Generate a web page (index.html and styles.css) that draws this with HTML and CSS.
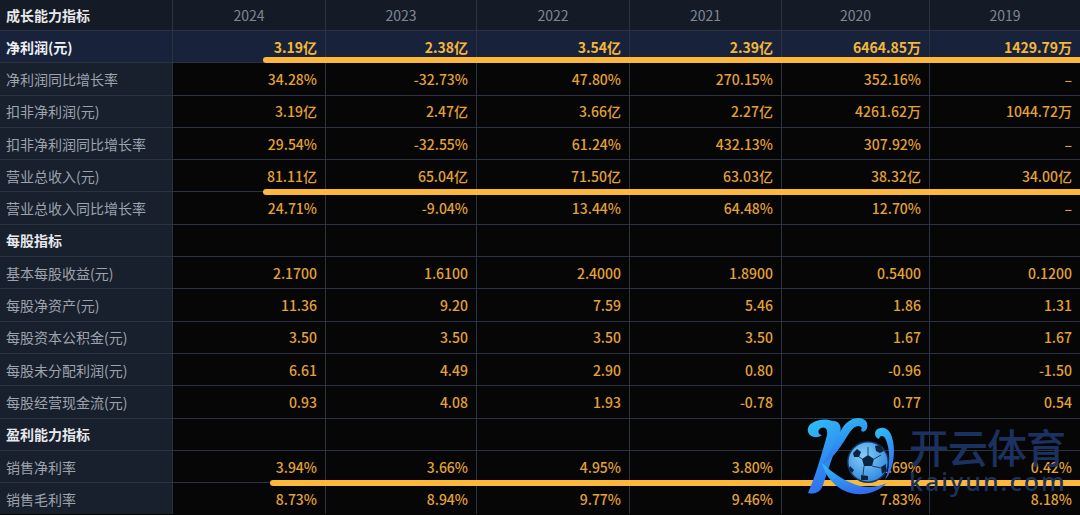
FILE: index.html
```html
<!DOCTYPE html>
<html lang="zh-CN">
<head>
<meta charset="utf-8">
<title>成长能力指标</title>
<link rel="stylesheet" href="styles.css">
</head>
<body>
<div class="page">
  <div class="grid">
    <div class="cell label head-label">成长能力指标</div>
    <div class="cell year">2024</div>
    <div class="cell year">2023</div>
    <div class="cell year">2022</div>
    <div class="cell year">2021</div>
    <div class="cell year">2020</div>
    <div class="cell year">2019</div>

    <div class="cell label hl-label">净利润(元)</div>
    <div class="cell val hl">3.19亿</div>
    <div class="cell val hl">2.38亿</div>
    <div class="cell val hl">3.54亿</div>
    <div class="cell val hl">2.39亿</div>
    <div class="cell val hl">6464.85万</div>
    <div class="cell val hl">1429.79万</div>

    <div class="cell label">净利润同比增长率</div>
    <div class="cell val">34.28%</div>
    <div class="cell val">-32.73%</div>
    <div class="cell val">47.80%</div>
    <div class="cell val">270.15%</div>
    <div class="cell val">352.16%</div>
    <div class="cell val">–</div>

    <div class="cell label">扣非净利润(元)</div>
    <div class="cell val">3.19亿</div>
    <div class="cell val">2.47亿</div>
    <div class="cell val">3.66亿</div>
    <div class="cell val">2.27亿</div>
    <div class="cell val">4261.62万</div>
    <div class="cell val">1044.72万</div>

    <div class="cell label">扣非净利润同比增长率</div>
    <div class="cell val">29.54%</div>
    <div class="cell val">-32.55%</div>
    <div class="cell val">61.24%</div>
    <div class="cell val">432.13%</div>
    <div class="cell val">307.92%</div>
    <div class="cell val">–</div>

    <div class="cell label">营业总收入(元)</div>
    <div class="cell val">81.11亿</div>
    <div class="cell val">65.04亿</div>
    <div class="cell val">71.50亿</div>
    <div class="cell val">63.03亿</div>
    <div class="cell val">38.32亿</div>
    <div class="cell val">34.00亿</div>

    <div class="cell label">营业总收入同比增长率</div>
    <div class="cell val">24.71%</div>
    <div class="cell val">-9.04%</div>
    <div class="cell val">13.44%</div>
    <div class="cell val">64.48%</div>
    <div class="cell val">12.70%</div>
    <div class="cell val">–</div>

    <div class="cell label section">每股指标</div>
    <div class="cell val"></div>
    <div class="cell val"></div>
    <div class="cell val"></div>
    <div class="cell val"></div>
    <div class="cell val"></div>
    <div class="cell val"></div>

    <div class="cell label">基本每股收益(元)</div>
    <div class="cell val">2.1700</div>
    <div class="cell val">1.6100</div>
    <div class="cell val">2.4000</div>
    <div class="cell val">1.8900</div>
    <div class="cell val">0.5400</div>
    <div class="cell val">0.1200</div>

    <div class="cell label">每股净资产(元)</div>
    <div class="cell val">11.36</div>
    <div class="cell val">9.20</div>
    <div class="cell val">7.59</div>
    <div class="cell val">5.46</div>
    <div class="cell val">1.86</div>
    <div class="cell val">1.31</div>

    <div class="cell label">每股资本公积金(元)</div>
    <div class="cell val">3.50</div>
    <div class="cell val">3.50</div>
    <div class="cell val">3.50</div>
    <div class="cell val">3.50</div>
    <div class="cell val">1.67</div>
    <div class="cell val">1.67</div>

    <div class="cell label">每股未分配利润(元)</div>
    <div class="cell val">6.61</div>
    <div class="cell val">4.49</div>
    <div class="cell val">2.90</div>
    <div class="cell val">0.80</div>
    <div class="cell val">-0.96</div>
    <div class="cell val">-1.50</div>

    <div class="cell label">每股经营现金流(元)</div>
    <div class="cell val">0.93</div>
    <div class="cell val">4.08</div>
    <div class="cell val">1.93</div>
    <div class="cell val">-0.78</div>
    <div class="cell val">0.77</div>
    <div class="cell val">0.54</div>

    <div class="cell label section">盈利能力指标</div>
    <div class="cell val"></div>
    <div class="cell val"></div>
    <div class="cell val"></div>
    <div class="cell val"></div>
    <div class="cell val"></div>
    <div class="cell val"></div>

    <div class="cell label">销售净利率</div>
    <div class="cell val">3.94%</div>
    <div class="cell val">3.66%</div>
    <div class="cell val">4.95%</div>
    <div class="cell val">3.80%</div>
    <div class="cell val">2.69%</div>
    <div class="cell val">0.42%</div>

    <div class="cell label">销售毛利率</div>
    <div class="cell val">8.73%</div>
    <div class="cell val">8.94%</div>
    <div class="cell val">9.77%</div>
    <div class="cell val">9.46%</div>
    <div class="cell val">7.83%</div>
    <div class="cell val">8.18%</div>
  </div>

  <div class="mark mark-1"></div>
  <div class="mark mark-2"></div>
  <div class="mark mark-3"></div>

  <div class="watermark">
    <svg class="wm-logo" viewBox="0 0 110 84" width="110" height="84">
      <defs>
        <linearGradient id="kg" x1="0" y1="0" x2="0.3" y2="1">
          <stop offset="0" stop-color="#2cc2f5"/>
          <stop offset="1" stop-color="#326fef"/>
        </linearGradient>
        <radialGradient id="bg" cx="0.4" cy="0.35" r="0.75">
          <stop offset="0" stop-color="#86cff7"/>
          <stop offset="1" stop-color="#2a83dc"/>
        </radialGradient>
      </defs>
      <!-- K stem with top-left curl -->
      <path d="M38 6 C45 6 47 12 45 20 L28 70 C26 77 19 80 13 78 C20 62 26 42 32 20 C33 14 30 11 26 13 C22 15 23 20 27 20 C21 25 11 21 13 13 C15 6 28 2 38 6 Z" fill="url(#kg)"/>
      <!-- K arm with top-right curl -->
      <path d="M71 6 C65 0 54 3 48 12 C41 23 36 38 27 49 C40 43 47 29 55 17 C59 11 64 9 67 13 C65 15 67 18 70 16 C73 14 73 9 71 6 Z" fill="url(#kg)"/>
      <!-- K leg sweeping under the ball -->
      <path d="M27 48 C31 64 44 77 61 79 C73 80 84 76 92 68 C81 73 69 73 59 69 C46 64 37 57 27 48 Z" fill="url(#kg)"/>
      <!-- right swirl -->
      <path d="M86 13 C79 13 78 22 84 24 C85 20 89 20 91 25 C95 35 96 51 90 65 C99 55 101 35 97 22 C95 16 91 12 86 13 Z" fill="url(#kg)"/>
      <!-- ball -->
      <circle cx="73" cy="47" r="21" fill="#0f3566"/>
      <circle cx="73" cy="47" r="19.5" fill="url(#bg)"/>
      <polygon points="73,40 79,44 77,51 69,51 67,44" fill="#0c2444"/>
      <polygon points="58,38 62,34 66,37 64,42 59,42" fill="#0c2444"/>
      <polygon points="80,31 85,30 89,36 85,38 81,36" fill="#0c2444"/>
      <polygon points="86,52 91,49 91,56 87,59" fill="#0c2444"/>
      <polygon points="66,60 73,61 73,65 66,65" fill="#0c2444"/>
      <polygon points="55,51 59,55 57,58 54,54" fill="#0c2444"/>
      <g stroke="#0c2444" stroke-width="0.8" fill="none">
        <path d="M73 40 L73 32"/><path d="M79 44 L86 40"/><path d="M77 51 L86 53"/>
        <path d="M69 51 L68 60"/><path d="M67 44 L63 41"/>
      </g>
    </svg>
    <div class="wm-text">
      <div class="wm-cn">开云体育</div>
      <div class="wm-en">kaiyun.com</div>
    </div>
  </div>
</div>
</body>
</html>
```

FILE: styles.css
```css
* { box-sizing: border-box; }
html, body {
  margin: 0;
  padding: 0;
  background: #050505;
  overflow: hidden;
}
.page {
  position: relative;
  width: 1080px;
  height: 515px;
  overflow: hidden;
  font-family: "Noto Sans CJK SC", "Noto Sans", sans-serif;
}
.grid {
  display: grid;
  grid-template-columns: 172px 152px 150px 152px 151px 147px 150px;
  grid-template-rows: 30px repeat(15, 31.3px);
  gap: 1px;
  background: #2b3242;
  width: 1080px;
}
.cell {
  display: flex;
  align-items: center;
  font-size: 14px;
  line-height: 1;
  white-space: nowrap;
}
.label {
  background: #19202d;
  color: #9da3ad;
  padding-left: 6px;
}
.head-label {
  background: #151b26;
  color: #e6e8ec;
  font-weight: 700;
}
.section {
  color: #e6e8ec;
  font-weight: 700;
}
.year {
  background: #151b26;
  color: #7f8795;
  justify-content: center;
  font-size: 14px;
}
.val {
  background: #060606;
  color: #e3a136;
  justify-content: flex-end;
  padding-right: 8px;
  font-weight: 500;
}
.hl-label {
  background: #18223a;
  color: #eef0f4;
  font-weight: 700;
}
.hl {
  background: #18223a;
  color: #f5b739;
  font-weight: 700;
}

.mark {
  position: absolute;
  height: 6px;
  right: 0;
  background: #fbb83a;
  border-radius: 3px 0 0 3px;
}
.mark-1 { top: 57px; left: 263px; }
.mark-2 { top: 189px; left: 263px; }
.mark-3 { top: 480px; left: 270px; }

.watermark {
  position: absolute;
  left: 795px;
  top: 415px;
  display: flex;
  align-items: flex-start;
  gap: 4px;
}
.wm-logo { display: block; }
.wm-text {
  display: flex;
  flex-direction: column;
  padding-top: 8px;
}
.wm-cn {
  font-family: "Noto Sans CJK SC", sans-serif;
  font-size: 40px;
  font-weight: 500;
  line-height: 46px;
  color: #1b3261;
  letter-spacing: -1px;
}
.wm-en {
  font-family: "Noto Sans", sans-serif;
  font-size: 25px;
  line-height: 24px;
  color: #1b3261;
  letter-spacing: 2px;
  font-weight: 500;
}
```
